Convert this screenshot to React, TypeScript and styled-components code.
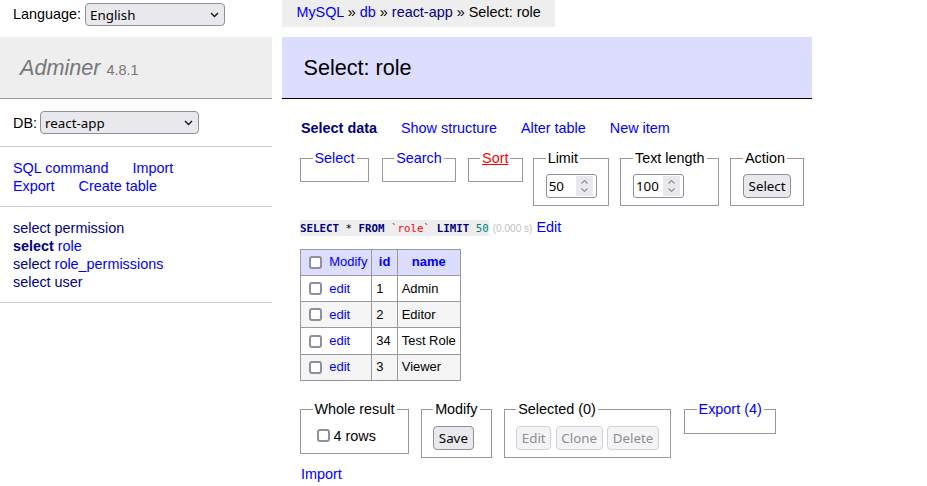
import React from "react";
import styled, { createGlobalStyle, css } from "styled-components";

const GlobalStyle = createGlobalStyle`
  html, body { margin: 0; padding: 0; background: #fff; }
  body {
    color: #000;
    font: 14.4px/1.25 "Liberation Sans", Arial, Helvetica, sans-serif;
  }
`;

type Tone = "blue" | "navy" | "red";

const Link = styled.a<{ $tone?: Tone; $bold?: boolean }>`
  color: ${(p) => (p.$tone === "navy" ? "#000080" : p.$tone === "red" ? "#ff0000" : "#0000ff")};
  text-decoration: ${(p) => (p.$tone === "red" ? "underline" : "none")};
  font-weight: ${(p) => (p.$bold ? "bold" : "normal")};
  cursor: pointer;
  white-space: nowrap;
`;

const controlFont = css`
  font-family: "Noto Sans", "DejaVu Sans", sans-serif;
  font-size: 13.33px;
  color: #000;
`;

/* ---------- form controls ---------- */

const SelectWrap = styled.span`
  position: relative;
  display: inline-block;
  height: 23px;
`;

const NativeSelect = styled.select<{ $w: number }>`
  ${controlFont};
  appearance: none;
  -webkit-appearance: none;
  box-sizing: border-box;
  width: ${(p) => p.$w}px;
  height: 23px;
  margin: 0;
  padding: 0 20px 0 4px;
  background: #e9e9ed;
  border: 1px solid #8f8f9d;
  border-radius: 4px;
  outline: none;
  vertical-align: top;
`;

const Chevron = styled.svg`
  position: absolute;
  right: 6px;
  top: 9px;
  pointer-events: none;
`;

function Dropdown({ value, width }: { value: string; width: number }) {
  return (
    <SelectWrap>
      <NativeSelect $w={width} defaultValue={value}>
        <option>{value}</option>
      </NativeSelect>
      <Chevron width="9" height="6" viewBox="0 0 9 6">
        <path d="M1 1l3.5 3.5L8 1" fill="none" stroke="#1c1b22" strokeWidth="1.5" />
      </Chevron>
    </SelectWrap>
  );
}

const NumberWrap = styled.span`
  position: relative;
  display: inline-block;
  vertical-align: top;
  height: 24px;
`;

const NumberField = styled.input`
  ${controlFont};
  box-sizing: border-box;
  width: 51px;
  height: 24px;
  margin: 0;
  padding: 0 0 0 2px;
  border: 1px solid #8f8f9d;
  border-radius: 3px;
  background: #fff;
  outline: none;
  vertical-align: top;
  -moz-appearance: textfield;
  &::-webkit-inner-spin-button,
  &::-webkit-outer-spin-button {
    -webkit-appearance: none;
    margin: 0;
  }
`;

const Spinner = styled.svg`
  position: absolute;
  right: 4px;
  top: 2px;
  pointer-events: none;
`;

function NumberInput({ value }: { value: string }) {
  return (
    <NumberWrap>
      <NumberField type="number" defaultValue={value} />
      <Spinner width="17" height="20" viewBox="0 0 17 20">
        <rect x="0" y="0" width="17" height="20" fill="#e9e9ed" />
        <path d="M5.5 7.5l3-3 3 3" fill="none" stroke="#8c8c94" strokeWidth="1.1" />
        <path d="M5.5 12.5l3 3 3-3" fill="none" stroke="#8c8c94" strokeWidth="1.1" />
      </Spinner>
    </NumberWrap>
  );
}

const Button = styled.button`
  ${controlFont};
  box-sizing: border-box;
  height: 24px;
  margin: 0;
  padding: 0 4.7px;
  background: #e9e9ed;
  border: 1px solid #8f8f9d;
  border-radius: 4px;
  cursor: pointer;
  vertical-align: top;
  &:disabled {
    color: #8e8e93;
    background: #f4f4f6;
    border-color: #d2d2d8;
    cursor: default;
  }
`;

const Check = styled.input.attrs({ type: "checkbox" })`
  appearance: none;
  -webkit-appearance: none;
  box-sizing: border-box;
  flex: none;
  width: 13px;
  height: 13px;
  margin: 0 3px 0 4px;
  border: 2px solid #8f8f9d;
  border-radius: 3px;
  background: #fff;
`;

/* ---------- layout ---------- */

const Page = styled.div`
  display: flex;
  align-items: flex-start;
`;

const Sidebar = styled.nav`
  flex: none;
  width: 272px;
`;

const LangBar = styled.div`
  display: flex;
  align-items: flex-start;
  gap: 4px;
  height: 37px;
  box-sizing: border-box;
  padding: 3px 13px 0;
  line-height: 23px;
`;

const Brand = styled.h1`
  margin: 0;
  height: 62px;
  box-sizing: border-box;
  padding: 17px 20px;
  font-size: 21.6px;
  line-height: 27px;
  font-weight: normal;
  color: #777;
  background: #eee;
  border-bottom: 1px solid #999;
  white-space: nowrap;
`;

const BrandName = styled.a`
  color: #777;
  font-style: italic;
  text-decoration: none;
`;

const Version = styled.span`
  color: #777;
  font-size: 14.47px;
  line-height: 1;
`;

const MenuBlock = styled.div`
  padding: 11.5px 13px;
  border-bottom: 1px solid #ccc;
`;

const DbRow = styled.div`
  display: flex;
  align-items: center;
  gap: 3px;
  height: 24px;
`;

const LinkLine = styled.div`
  display: flex;
  gap: 24px;
  line-height: 18px;
`;

const TableLine = styled.div`
  line-height: 18px;
  white-space: nowrap;
`;

const Main = styled.main`
  flex: none;
  width: 530px;
  margin-left: 10px;
`;

const Breadcrumb = styled.div`
  width: fit-content;
  height: 27px;
  line-height: 25px;
  padding: 0 14.4px;
  background: #eee;
  white-space: nowrap;
`;

const TitleBar = styled.h2`
  margin: 10px 0 0;
  height: 62px;
  box-sizing: border-box;
  padding: 17px 21.6px;
  font-size: 21.6px;
  line-height: 27px;
  font-weight: normal;
  color: #000;
  background: #ddf;
  border-bottom: 1px solid #000;
`;

const Content = styled.div`
  padding-left: 18px;
`;

const TabLinks = styled.div`
  display: flex;
  gap: 24px;
  margin-top: 20px;
  padding-left: 1px;
  line-height: 18px;
`;

const FieldRow = styled.div<{ $top: number; $gap: number }>`
  display: flex;
  align-items: flex-start;
  gap: ${(p) => p.$gap}px;
  margin-top: ${(p) => p.$top}px;
`;

const Fieldset = styled.fieldset<{ $shift?: number }>`
  margin: 0 0 0 ${(p) => p.$shift ?? 0}px;
  padding: 7.2px 11.52px;
  border: 1px solid #999;
  min-width: 0;
`;

const Legend = styled.legend`
  padding: 0 2px;
  line-height: 18px;
`;

const ButtonGroup = styled.div`
  display: flex;
  gap: 4.3px;
`;

const CheckLabel = styled.label`
  display: flex;
  align-items: center;
  gap: 1px;
  height: 20px;
  white-space: nowrap;
`;

const SqlLine = styled.div`
  margin-top: 11.5px;
  height: 18px;
  line-height: 18px;
  white-space: nowrap;
`;

const Code = styled.code`
  font-family: "DejaVu Sans Mono", "Liberation Mono", monospace;
  font-size: 10.8px;
  line-height: 12px;
  background: #eee;
  padding: 2px 0 1px;
`;

const Kw = styled.span<{ $kind?: "kw" | "op" | "bac" | "num" }>`
  color: ${(p) =>
    p.$kind === "bac" ? "#ff0000" : p.$kind === "num" ? "#007f7f" : p.$kind === "op" ? "#000" : "#000080"};
  font-weight: ${(p) => (p.$kind === "kw" || !p.$kind ? "bold" : "normal")};
`;

const Time = styled.span`
  color: silver;
  font-size: 10.08px;
  line-height: 12px;
`;

const Grid = styled.table`
  margin-top: 13px;
  border-collapse: collapse;
  font-size: 12.96px;
  line-height: 16.2px;
`;

const HeadCell = styled.th`
  background: #ddf;
  padding: 2.6px 6.5px;
  text-align: center;
  border: 1px solid #999;
  font-weight: bold;
`;

const Cell = styled.td<{ $head?: boolean }>`
  padding: 2.6px 3.9px;
  border: 1px solid #999;
  white-space: nowrap;
  ${(p) => p.$head && "background: #ddf;"}
`;

const RowTools = styled.div`
  display: flex;
  align-items: center;
  gap: 4.4px;
  height: 20px;
`;

const Row = styled.tr<{ $odd?: boolean }>`
  background: ${(p) => (p.$odd ? "#f5f5f5" : "#fff")};
`;

const FooterLine = styled.div`
  margin-top: 7.5px;
  padding-left: 1px;
  line-height: 18px;
`;

const rows = [
  { id: "1", name: "Admin" },
  { id: "2", name: "Editor" },
  { id: "34", name: "Test Role" },
  { id: "3", name: "Viewer" },
];

export default function App() {
  return (
    <>
      <GlobalStyle />
      <Page>
        <Sidebar>
          <LangBar>
            <span>Language:</span>
            <Dropdown value="English" width={140} />
          </LangBar>
          <Brand>
            <BrandName>Adminer</BrandName> <Version>4.8.1</Version>
          </Brand>
          <MenuBlock>
            <DbRow>
              <span>DB:</span>
              <Dropdown value="react-app" width={159} />
            </DbRow>
          </MenuBlock>
          <MenuBlock>
            <LinkLine>
              <Link>SQL command</Link>
              <Link>Import</Link>
            </LinkLine>
            <LinkLine>
              <Link>Export</Link>
              <Link>Create table</Link>
            </LinkLine>
          </MenuBlock>
          <MenuBlock>
            <TableLine>
              <Link $tone="navy">select</Link> <Link $tone="navy">permission</Link>
            </TableLine>
            <TableLine>
              <Link $tone="navy" $bold>select</Link> <Link>role</Link>
            </TableLine>
            <TableLine>
              <Link $tone="navy">select</Link> <Link>role_permissions</Link>
            </TableLine>
            <TableLine>
              <Link $tone="navy">select</Link> <Link $tone="navy">user</Link>
            </TableLine>
          </MenuBlock>
        </Sidebar>

        <Main>
          <Breadcrumb>
            <Link>MySQL</Link> » <Link>db</Link> » <Link $tone="navy">react-app</Link> » Select: role
          </Breadcrumb>
          <TitleBar>Select: role</TitleBar>
          <Content>
            <TabLinks>
              <Link $tone="navy" $bold>Select data</Link>
              <Link>Show structure</Link>
              <Link>Alter table</Link>
              <Link>New item</Link>
            </TabLinks>

            <FieldRow $top={12} $gap={11.3}>
              <Fieldset>
                <Legend><Link>Select</Link></Legend>
              </Fieldset>
              <Fieldset $shift={1.3}>
                <Legend><Link>Search</Link></Legend>
              </Fieldset>
              <Fieldset>
                <Legend><Link $tone="red">Sort</Link></Legend>
              </Fieldset>
              <Fieldset $shift={-1.2}>
                <Legend>Limit</Legend>
                <NumberInput value="50" />
              </Fieldset>
              <Fieldset>
                <Legend>Text length</Legend>
                <NumberInput value="100" />
              </Fieldset>
              <Fieldset>
                <Legend>Action</Legend>
                <Button>Select</Button>
              </Fieldset>
            </FieldRow>

            <SqlLine>
              <Code>
                <Kw>SELECT</Kw> <Kw $kind="op">*</Kw> <Kw>FROM</Kw> <Kw $kind="bac">`role`</Kw> <Kw>LIMIT</Kw>{" "}
                <Kw $kind="num">50</Kw>
              </Code>{" "}
              <Time>(0.000 s)</Time> <Link>Edit</Link>
            </SqlLine>

            <Grid>
              <thead>
                <tr>
                  <Cell $head>
                    <RowTools>
                      <Check />
                      <Link>Modify</Link>
                    </RowTools>
                  </Cell>
                  <HeadCell><Link $bold>id</Link></HeadCell>
                  <HeadCell><Link $bold>name</Link></HeadCell>
                </tr>
              </thead>
              <tbody>
                {rows.map((r, i) => (
                  <Row key={r.id} $odd={i % 2 === 1}>
                    <Cell>
                      <RowTools>
                        <Check />
                        <Link>edit</Link>
                      </RowTools>
                    </Cell>
                    <Cell>{r.id}</Cell>
                    <Cell>{r.name}</Cell>
                  </Row>
                ))}
              </tbody>
            </Grid>

            <FieldRow $top={19.6} $gap={11.6}>
              <Fieldset>
                <Legend>Whole result</Legend>
                <CheckLabel>
                  <Check />4 rows
                </CheckLabel>
              </Fieldset>
              <Fieldset>
                <Legend>Modify</Legend>
                <Button>Save</Button>
              </Fieldset>
              <Fieldset>
                <Legend>Selected (0)</Legend>
                <ButtonGroup>
                  <Button disabled>Edit</Button>
                  <Button disabled>Clone</Button>
                  <Button disabled>Delete</Button>
                </ButtonGroup>
              </Fieldset>
              <Fieldset $shift={1}>
                <Legend><Link>Export (4)</Link></Legend>
              </Fieldset>
            </FieldRow>

            <FooterLine>
              <Link>Import</Link>
            </FooterLine>
          </Content>
        </Main>
      </Page>
    </>
  );
}
